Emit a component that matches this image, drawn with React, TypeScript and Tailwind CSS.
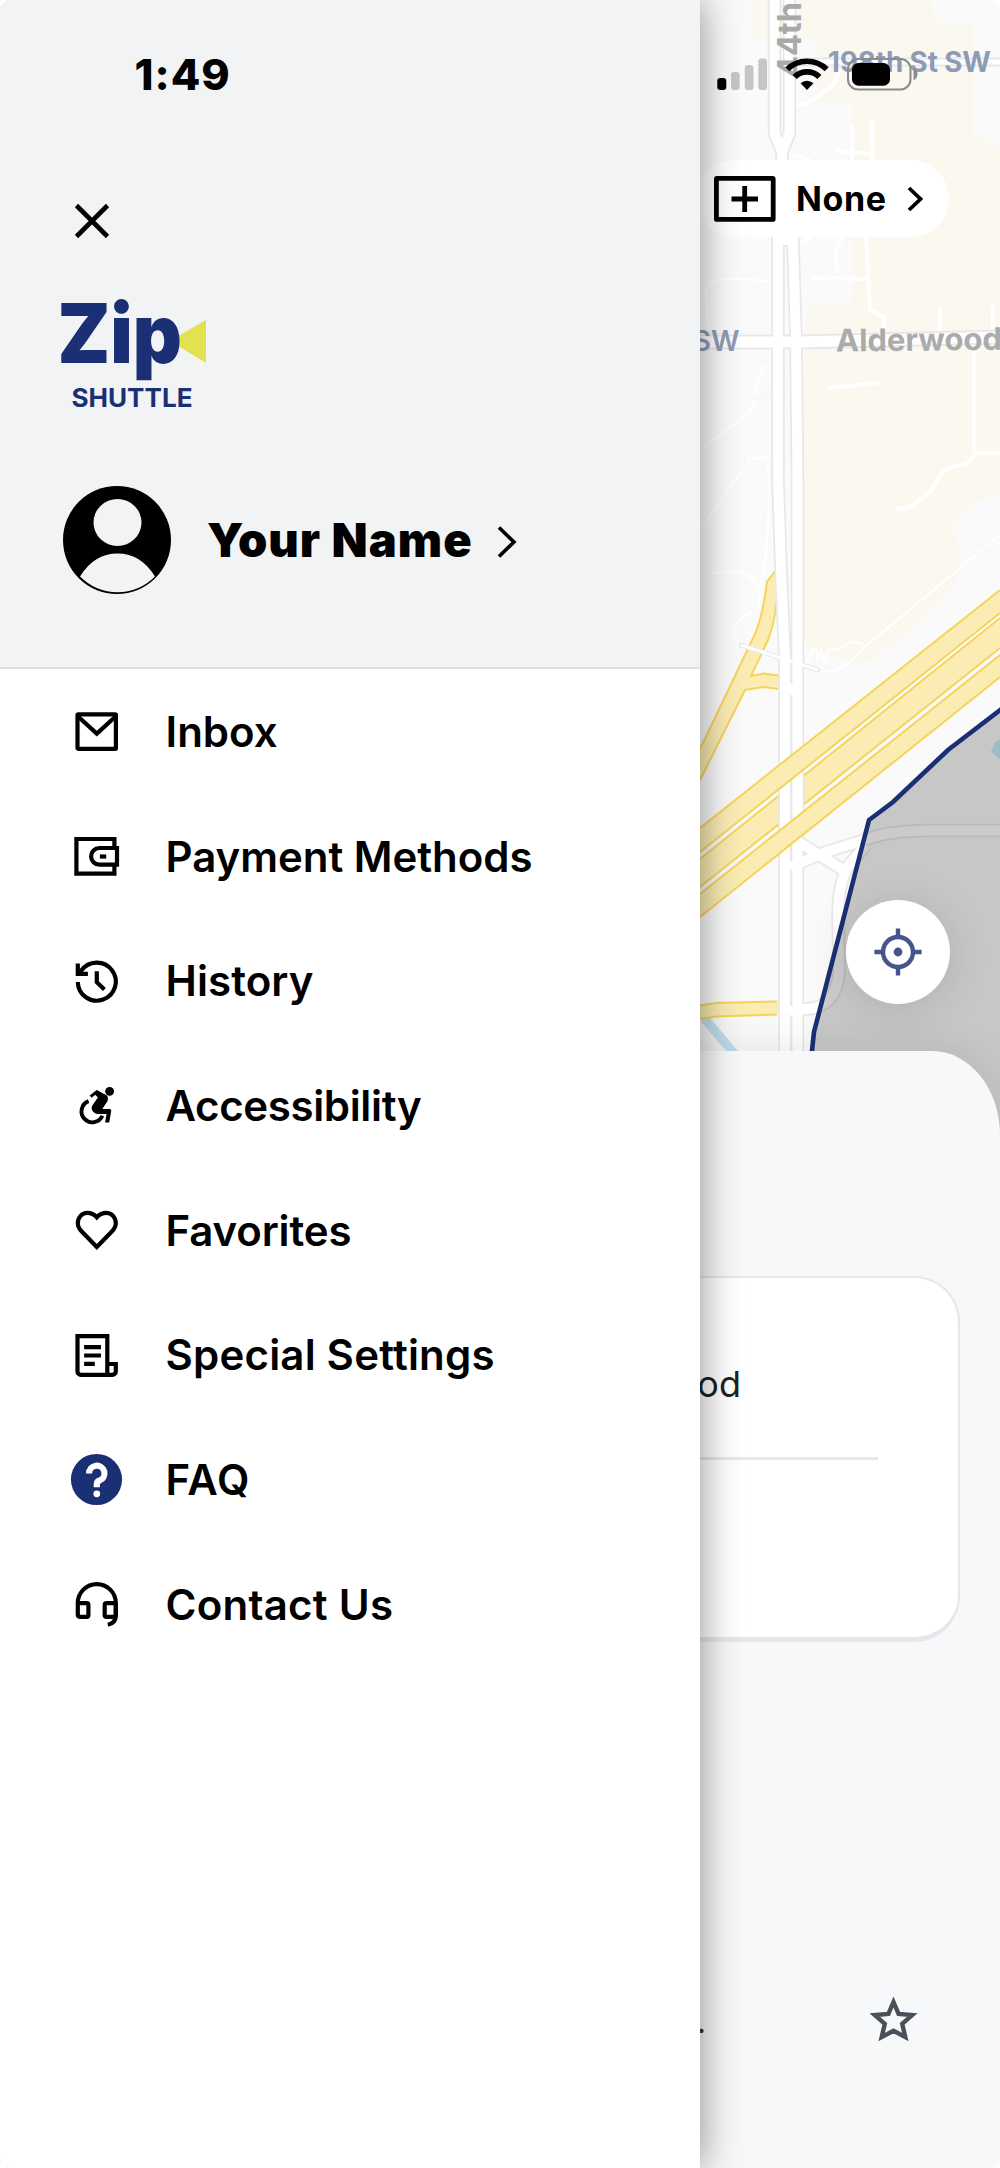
import type { ReactNode } from "react";

const NAVY = "#1b2f75";

function MailIcon() {
  return (
    <>
      <rect x="7.5" y="9.4" width="38.4" height="34.4" rx="0.6" />
      <path d="M8 11.5 26.8 28.6 45.6 11.5" />
    </>
  );
}

function WalletIcon() {
  return (
    <>
      <path d="M44.4 17V9H6.4v34.7h38V36" />
      <path d="M47 18H29.3a8.2 8.2 0 0 0-8.2 8.2v.3a8.2 8.2 0 0 0 8.2 8.2H47Z" />
      <path d="M29.9 26.5h6.3" />
    </>
  );
}

function HistoryIcon() {
  return (
    <>
      <path d="M7.8 27a19 19 0 1 0 3.4-11.2L8.8 19" />
      <path d="M7.8 8.6v10.2h10.1" />
      <path d="M26.8 16.3v10.9l7.6 7.4" />
    </>
  );
}

function WheelchairIcon() {
  return (
    <>
      <circle cx="39.6" cy="12.3" r="4.4" fill="black" stroke="none" />
      <path d="M20.6 17.6 26.8 12.8 34 17" strokeWidth="3" />
      <path d="M18.6 22.2A10.9 10.9 0 1 0 32.4 36.8" strokeWidth="3.9" />
      <path
        d="M26.8 11.2 37 16.6Q38.6 18.5 37.6 22L32.3 30H39.8Q41.5 30 41.2 32L39.2 43.6H35.1L36.6 34.9H27Q22 33.6 21.7 29.6 21.6 27.6 23 25.6L27.9 18.6 24.5 15Z"
        fill="black"
        stroke="none"
      />
    </>
  );
}

function HeartIcon() {
  return (
    <path d="M26.8 13.3C24.3 10.6 21 8.9 17.3 8.9 12 8.9 7.8 13.3 7.8 19.2c0 3.6 1.5 5.8 4.2 8.6l14.8 15.2 14.8-15.2c2.7-2.8 4.2-5 4.2-8.6C45.8 13.3 41.6 8.9 36.3 8.9c-3.7 0-7 1.7-9.5 4.4Z" />
  );
}

function ReceiptIcon() {
  return (
    <>
      <path d="M37.3 45.8V7.2H7.5V42.4a3.4 3.4 0 0 0 3.4 3.4H42.4a3.4 3.4 0 0 0 3.4-3.4V35H37.3" />
      <path d="M14.1 18.2H31M14.1 26.5H31M14.1 34.9H24.8" />
    </>
  );
}

function HelpIcon() {
  return (
    <>
      <circle cx="26.5" cy="26.5" r="25.6" fill={NAVY} stroke="none" />
      <path d="M19.1 20.4a7.7 7.7 0 1 1 10.6 7.1q-2.9 1.1-2.9 3.6v3.2" stroke="white" strokeWidth="6.2" />
      <circle cx="26.8" cy="40.8" r="3.4" fill="white" stroke="none" />
    </>
  );
}

function HeadsetIcon() {
  return (
    <>
      <path d="M7.8 26v-1a19 18.9 0 0 1 38 0v12.5c0 5-2.8 8.3-8 9.2" />
      <rect x="7.8" y="25.1" width="10.6" height="13.7" rx="1.8" />
      <rect x="34.7" y="25.1" width="11.1" height="13.7" rx="1.8" />
    </>
  );
}

const MENU: { label: string; icon: ReactNode; tracking: string }[] = [
  { label: "Inbox", icon: <MailIcon />, tracking: "tracking-[0px]" },
  { label: "Payment Methods", icon: <WalletIcon />, tracking: "tracking-[-0.05px]" },
  { label: "History", icon: <HistoryIcon />, tracking: "tracking-[0.1px]" },
  { label: "Accessibility", icon: <WheelchairIcon />, tracking: "tracking-[-0.35px]" },
  { label: "Favorites", icon: <HeartIcon />, tracking: "tracking-[-0.15px]" },
  { label: "Special Settings", icon: <ReceiptIcon />, tracking: "tracking-[0.2px]" },
  { label: "FAQ", icon: <HelpIcon />, tracking: "tracking-[0.9px]" },
  { label: "Contact Us", icon: <HeadsetIcon />, tracking: "tracking-[0.25px]" },
];

function Logo() {
  return (
    <svg className="ml-[60px] mt-[56px] block h-[118px] w-[160px] shrink-0 overflow-visible" viewBox="60 295 160 118">
      <path d="M179 335.5 206 320V363L179 346.5Z" fill="#e2e150" />
      <g fill={NAVY} fontFamily="Inter">
        <text x="57.5" y="362.5" fontSize="82" fontWeight="900" textLength="124.5" lengthAdjust="spacingAndGlyphs">
          Zip
        </text>
        <text x="71.5" y="406.7" fontSize="25.6" fontWeight="700" textLength="121" lengthAdjust="spacingAndGlyphs">
          SHUTTLE
        </text>
      </g>
    </svg>
  );
}

function Avatar() {
  return (
    <svg className="size-[108px]" viewBox="0 0 108 108">
      <circle cx="54" cy="54" r="54" fill="black" />
      <ellipse cx="54.5" cy="36.5" rx="24" ry="23.5" fill="#f2f3f5" />
      <path d="M17 90.5Q31 67.5 54.5 67.5 78 67.5 92 90.5 76 106.3 54.5 106.3 33 106.3 17 90.5Z" fill="#f2f3f5" />
    </svg>
  );
}

function Drawer() {
  return (
    <aside className="absolute inset-y-0 left-0 flex w-[700px] flex-col bg-white shadow-[0_0_38px_rgba(0,0,0,0.45)]">
      <header className="flex h-[669px] shrink-0 flex-col border-b-2 border-[#dfdfe1] bg-[#f2f3f5]">
        <div className="mt-[49px] h-[51px] pl-[134.5px] text-[43px] leading-[50px] font-extrabold tracking-[1px]">1:49</div>
        <button className="ml-[74px] mt-[103px] size-9" aria-label="Close">
          <svg className="block size-9" viewBox="0 0 36 36" fill="none" stroke="black" strokeWidth="4.6">
            <path d="M2.5 2.5 33.5 33.5M33.5 2.5 2.5 33.5" />
          </svg>
        </button>
        <Logo />
        <div className="ml-[63px] mt-[73px] flex h-[108px] items-center">
          <Avatar />
          <span className="-mt-[2px] ml-[36px] w-[265px] text-[47px] leading-none font-black whitespace-nowrap tracking-[1px]">
            Your Name
          </span>
          <svg className="ml-[24px] mt-[3px] h-[36px] w-[24px]" viewBox="0 0 24 36" fill="none" stroke="black" strokeWidth="3.6">
            <path d="M3 3.5 18 18 3 32.5" />
          </svg>
        </div>
      </header>
      <nav className="flex flex-col pt-[1px]">
        {MENU.map((item) => (
          <a key={item.label} className="flex h-[124.7px] items-center pl-[70px]">
            <svg className="size-[54px] shrink-0" viewBox="0 0 54 54" fill="none" stroke="black" strokeWidth="4.2">
              {item.icon}
            </svg>
            <span className={`-mt-[1px] ml-[41.5px] text-[42px] leading-none font-[570] whitespace-nowrap ${item.tracking}`}>
              {item.label}
            </span>
          </a>
        ))}
      </nav>
    </aside>
  );
}

const LANES = [
  "M774.5 -5V133L782 152V240L778 240V480L781 570 785 660V1060",
  "M789.5 -5V133L782 152V240L793 240 796 340 797.5 480V1060",
];

const FRONTAGE = [
  "M790 867 826 852 880 835Q900 831 927 830.5H1005",
  "M800 843 845 871",
  "M866 845 848 866Q838 885 838 915L839 965Q840 1000 815 1008L790 1011",
];

const MINOR = [
  "M838 70Q838 85 826 90 812 104 798 105",
  "M852 127V160M872 120V160M837 151 872 154",
  "M790 155Q805 156 812 162M800 243Q812 238 815 232M842 237 836 250 837 272",
  "M866 237 870 310 884 317V333M812 278 868 279M940 308V333M993 306V333",
  "M829 388 877 383",
];

const FINE = [
  "M708 330 706 290Q712 277 730 279L772 281",
  "M700 450 750 412 755 400M700 530 750 460Q755 457 775 457",
  "M768 458Q771 560 758 590 763 610 750 613 735 620 734 633 735 643 745 648",
  "M710 573 740 572Q755 577 758 590",
  "M807 662 813 649 817 649 817 660 821 649 825 662 829 649H840Q850 640 858 642L866 646 1000 535",
  "M800 662 815 670Q835 676 850 662L866 646",
  "M755 395Q757 370 768 366",
];

function MapCanvas() {
  return (
    <svg className="absolute top-0 left-[700px] block h-[1200px] w-[300px]" viewBox="700 0 300 1200" fill="none">
      <rect x="700" width="300" height="1200" fill="#fafafa" />
      <g fill="#faf8ef">
        <path d="M752 0V38H818V102H852V302H809L804 333V640L812 650 835 658 855 662 872 660 890 648 940 603 955 585 961 562 958 540 950 528 968 512 972 504 995 493 1000 498V0Z" />
        <path d="M756 400 772 387V400Z" />
      </g>
      <path d="M932 0V13L943 24H973V136L985 138 1000 150V0Z" fill="#fafafa" />

      <g stroke="white" strokeWidth="4" strokeLinecap="round" strokeLinejoin="round">
        {MINOR.map((d) => (
          <path key={d} d={d} />
        ))}
      </g>
      <path d="M974 347V448M1000 453H975Q974 459 965 464 945 468 940 475L932 490 912 506Q907 509 898 508.5" stroke="white" strokeWidth="4" strokeLinecap="round" />
      <g stroke="white" strokeWidth="2">
        {FINE.map((d) => (
          <path key={d} d={d} />
        ))}
      </g>

      <path d="M704 1018 738 1058" stroke="#c3e3ee" strokeWidth="9" />
      <path d="M991 751 996 741 1000 740V760Z" fill="#c4ecf9" />

      <path d="M700 859 1000 618V648L700 887Z" fill="#faecb3" />
      <path d="M700 859 1000 618M1000 648 700 887" stroke="#f7d459" strokeWidth="2" />

      <path d="M775 571 767 582Q763 615 755 634L700 749V780L745 690 764 687 779 688V675L764 673 751 676 768 640 777 600Z" fill="#faecb3" />
      <path
        d="M775 571 767 582Q763 615 755 634L700 749M777 600Q774 625 768 640L751 676 764 673.5 778 675.5M778 689 764 687 745 690 700 780"
        stroke="#f7d459"
        strokeWidth="2"
      />
      <path d="M700 1005.5 716 1003 780 1001V1014.5L716 1016.5 700 1019Z" fill="#faecb3" />
      <path d="M700 1005.5 716 1003 777 1001.5M700 1019 716 1016.5 777 1014.5" stroke="#f7d459" strokeWidth="2" />

      <g stroke="#e8e8e8" strokeWidth="13.5">
        <path d="M700 342H800L1000 337" strokeWidth="15" />
        <path d="M790 62H1000" strokeWidth="9" />
        {FRONTAGE.map((d) => (
          <path key={d} d={d} />
        ))}
        {LANES.map((d) => (
          <path key={d} d={d} />
        ))}
      </g>
      <path d="M741 645 818 670" stroke="#ececec" strokeWidth="5" strokeLinecap="round" />
      <g stroke="white" strokeWidth="10">
        <path d="M700 342H800L1000 337" strokeWidth="11" />
        <path d="M790 62H1000" strokeWidth="5" />
        {FRONTAGE.map((d) => (
          <path key={d} d={d} />
        ))}
        {LANES.map((d) => (
          <path key={d} d={d} />
        ))}
        <path d="M741 645 818 670" strokeWidth="2.5" />
        <path d="M785 684 798 695" strokeWidth="9" />
      </g>

      <path d="M700 828 1000 590V613L700 852Z M700 894 1000 655V677L700 917Z" fill="#faecb3" />
      <path
        d="M700 828 1000 590M1000 613 700 852M700 894 1000 655M1000 677 700 917"
        stroke="#f7d459"
        strokeWidth="2"
      />

      <path d="M1000 710 948 750 893 802 869 820 814 1032 811 1060V1200H1000Z" fill="#000000" fillOpacity="0.205" />
      <path d="M1004 707 948 750 893 802 869 820 814 1032 811 1060" stroke={NAVY} strokeWidth="4.6" />

      <g fontFamily="Inter" fontWeight="600">
        <text transform="translate(801 78) rotate(-90)" fontSize="33" fontWeight="700" fill="#a9a9a9" textLength="76" lengthAdjust="spacingAndGlyphs">
          44th
        </text>
        <text x="828" y="72" fontSize="28" fill="#8e9bb6" fontWeight="650" textLength="163" lengthAdjust="spacingAndGlyphs">
          198th St SW
        </text>
        <text x="739.5" y="351" fontSize="28" fill="#8e9bb6" textAnchor="end">
          SW
        </text>
        <text x="836" y="351.5" fontSize="31" fill="#ababab" fontWeight="700" textLength="166" transform="rotate(-0.6 836 351)">
          Alderwood
        </text>
      </g>
    </svg>
  );
}

function StatusIcons() {
  return (
    <svg className="absolute top-[56px] left-[714px] h-[38px] w-[208px]" viewBox="714 56 208 38" fill="none">
      <rect x="717.3" y="78" width="9" height="12" rx="3" fill="black" />
      <g fill="#c5c5c6">
        <rect x="731" y="72" width="8.7" height="18" rx="3" />
        <rect x="744.8" y="65" width="8.7" height="25" rx="3" />
        <rect x="758.3" y="58.5" width="8.7" height="31.5" rx="3" />
      </g>
      <g stroke="black" strokeWidth="5.6">
        <path d="M787.3 69.3a28 28 0 0 1 39.4 0" />
        <path d="M794.6 77a17.5 17.5 0 0 1 24.8 0" />
      </g>
      <path d="M807 90 800.6 83.3a9.2 9.2 0 0 1 12.8 0Z" fill="black" />
      <rect x="848" y="59" width="62.5" height="30.5" rx="10" stroke="#8b8b8c" strokeWidth="2" />
      <rect x="852" y="63" width="38" height="22.7" rx="6.5" fill="black" />
      <path d="M913.5 67.5q4 2.5 4 6.5t-4 6.5Z" fill="#8b8b8c" />
    </svg>
  );
}

function PassengerPill() {
  return (
    <div className="absolute top-[160px] left-[696px] flex h-[77px] w-[253px] items-center rounded-full bg-white pl-[18px]">
      <svg className="h-[46px] w-[62px]" viewBox="0 0 62 46" fill="none" stroke="black" strokeWidth="4.8">
        <rect x="2.4" y="2.4" width="56.8" height="41" rx="0.5" />
        <path d="M17.5 23H44M30.7 10V36" />
      </svg>
      <span className="mt-[1px] ml-[20px] w-[94px] text-[34px] leading-none font-bold whitespace-nowrap tracking-[0.6px]">
        None
      </span>
      <svg className="ml-[16px] h-[28px] w-[20px]" viewBox="0 0 20 28" fill="none" stroke="black" strokeWidth="3.8">
        <path d="M3 3 14.5 14 3 25" />
      </svg>
    </div>
  );
}

function LocateButton() {
  return (
    <div className="absolute top-[900px] left-[846px] grid size-[104px] place-items-center rounded-full bg-white shadow-[0_4px_44px_rgba(0,0,0,0.12)]">
      <svg className="size-12" viewBox="0 0 48 48" fill="none" stroke="#46558b" strokeWidth="4.4">
        <circle cx="24" cy="24" r="15" />
        <path d="M24 0.4V8M24 40v7.6M0.4 24H8M40 24h7.6" />
        <circle cx="24" cy="24" r="4.4" fill="#46558b" stroke="none" />
      </svg>
    </div>
  );
}

function Sheet() {
  return (
    <section className="relative flex flex-1 flex-col rounded-tr-[68px_84px] bg-[#f7f8fa] shadow-[0_0_44px_rgba(0,0,0,0.1)]">
      <div className="mt-[225px] mr-[40px] flex h-[366px] flex-col rounded-r-[46px] border-2 border-b-[5px] border-[#e6e7ea] bg-white">
        <div className="flex h-[179px] items-center justify-end pt-[33px] pr-[217px] text-[36px] text-[#1c1f24]">
          Alderwood
        </div>
        <div className="mr-[80px] h-[3px] bg-[#e6e7ea]" />
      </div>
      <div className="mt-[346px] flex h-16 items-center justify-end pr-[81px] text-[#4a4f59]">
        <span className="mt-[4px] mr-[163px] text-[32px] text-[#33353a]">.</span>
        <svg className="size-[50px]" viewBox="0 0 50 50" fill="none" stroke="currentColor" strokeWidth="4.4">
          <path d="M24.5 7 29.6 18.9 43.2 20.1 33.2 28.8 36.3 42.1 24.5 35.7 12.7 42.1 15.8 28.8 5.8 20.1 19.4 18.9Z" />
        </svg>
      </div>
    </section>
  );
}

export default function App() {
  return (
    <div className="bg-white">
      <div className="relative flex h-[2168px] w-[1000px] flex-col overflow-hidden rounded-[10px] font-['Inter',sans-serif] text-black">
        <main className="flex flex-1 flex-col">
          <MapCanvas />
          <div className="relative h-[1051px] shrink-0">
            <StatusIcons />
            <PassengerPill />
            <LocateButton />
          </div>
          <Sheet />
        </main>
        <Drawer />
      </div>
    </div>
  );
}
